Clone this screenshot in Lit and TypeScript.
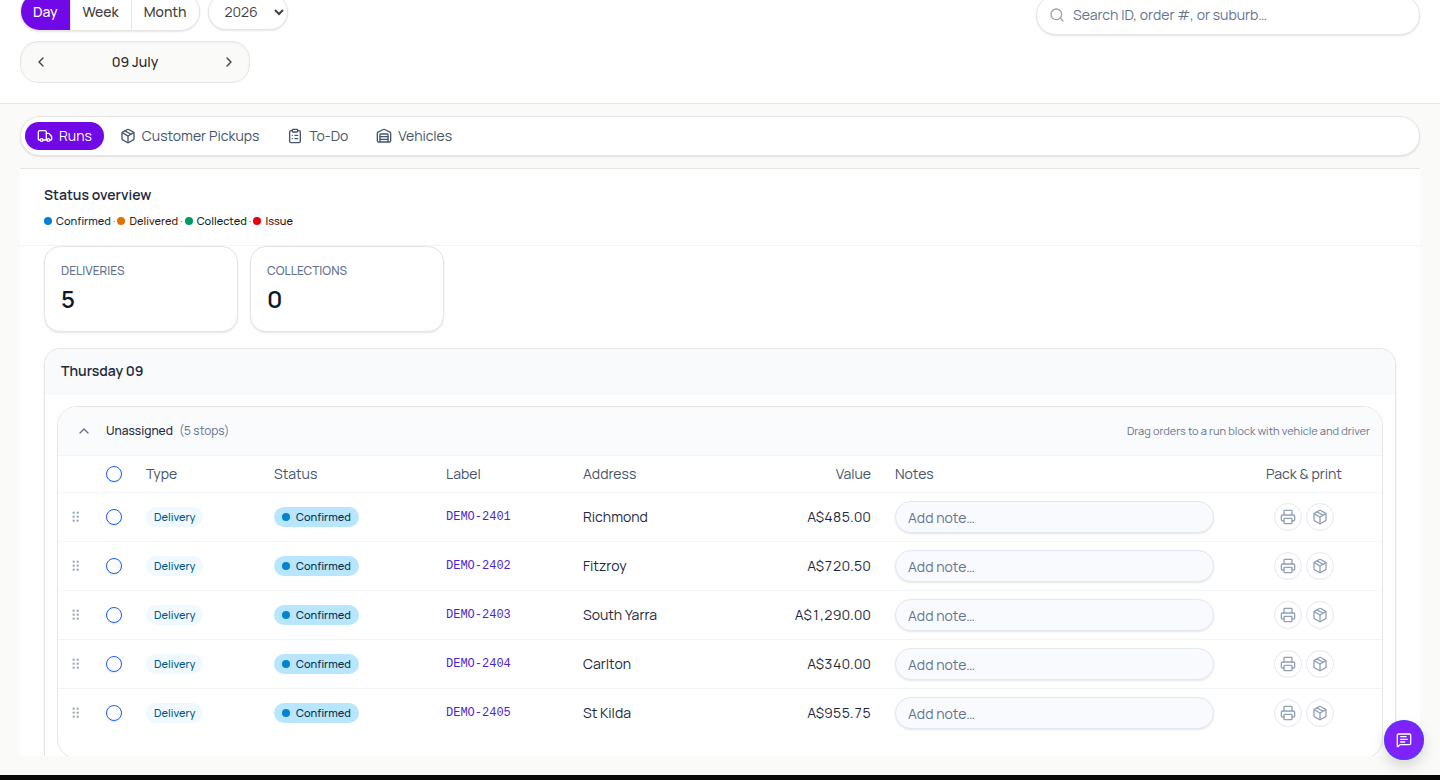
import { LitElement, html, css, svg, nothing } from "lit";
import { customElement, property, state } from "lit/decorators.js";
import { classMap } from "lit/directives/class-map.js";

const ICONS: Record<string, unknown> = {
  truck: svg`<path d="M14 18V6a2 2 0 0 0-2-2H4a2 2 0 0 0-2 2v11a1 1 0 0 0 1 1h2"/><path d="M15 18H9"/><path d="M19 18h2a1 1 0 0 0 1-1v-3.65a1 1 0 0 0-.22-.624l-3.48-4.35A1 1 0 0 0 17.52 8H14"/><circle cx="17" cy="18" r="2"/><circle cx="7" cy="18" r="2"/>`,
  package: svg`<path d="M11 21.73a2 2 0 0 0 2 0l7-4A2 2 0 0 0 21 16V8a2 2 0 0 0-1-1.73l-7-4a2 2 0 0 0-2 0l-7 4A2 2 0 0 0 3 8v8a2 2 0 0 0 1 1.73z"/><path d="M12 22V12"/><path d="M3.29 7 12 12l8.710-5"/><path d="m7.500 4.270 9 5.150"/>`,
  clipboard: svg`<rect width="8" height="4" x="8" y="2" rx="1" ry="1"/><path d="M16 4h2a2 2 0 0 1 2 2v14a2 2 0 0 1-2 2H6a2 2 0 0 1-2-2V6a2 2 0 0 1 2-2h2"/><path d="M12 11h4"/><path d="M12 16h4"/><path d="M8 11h.01"/><path d="M8 16h.01"/>`,
  warehouse: svg`<path d="M18 21V10a1 1 0 0 0-1-1H7a1 1 0 0 0-1 1v11"/><path d="M22 19a2 2 0 0 1-2 2H4a2 2 0 0 1-2-2V8a2 2 0 0 1 1.132-1.803l7.950-3.974a2 2 0 0 1 1.837 0l7.948 3.974A2 2 0 0 1 22 8z"/><path d="M6 13h12"/><path d="M6 17h12"/>`,
  search: svg`<circle cx="11" cy="11" r="8"/><path d="m21 21-4.340-4.340"/>`,
  left: svg`<path d="m15 18-6-6 6-6"/>`,
  right: svg`<path d="m9 18 6-6-6-6"/>`,
  up: svg`<path d="m18 15-6-6-6 6"/>`,
  down: svg`<path d="m6 9 6 6 6-6"/>`,
  printer: svg`<path d="M6 18H4a2 2 0 0 1-2-2v-5a2 2 0 0 1 2-2h16a2 2 0 0 1 2 2v5a2 2 0 0 1-2 2h-2"/><path d="M6 9V3a1 1 0 0 1 1-1h10a1 1 0 0 1 1 1v6"/><rect x="6" y="14" width="12" height="8" rx="1"/>`,
  message: svg`<path d="M22 17a2 2 0 0 1-2 2H6.828a2 2 0 0 0-1.414.586l-2.202 2.202A.71.71 0 0 1 2 21.286V5a2 2 0 0 1 2-2h16a2 2 0 0 1 2 2z"/><path d="M7 11h10"/><path d="M7 15h6"/><path d="M7 7h8"/>`,
  grip: svg`<g fill="currentColor" stroke="none"><rect x="7" y="4" width="3" height="3"/><rect x="13" y="4" width="3" height="3"/><rect x="7" y="10" width="3" height="3"/><rect x="13" y="10" width="3" height="3"/><rect x="7" y="16" width="3" height="3"/><rect x="13" y="16" width="3" height="3"/></g>`,
};

@customElement("ui-icon")
export class UiIcon extends LitElement {
  @property() name = "";

  static styles = css`
    :host { display: inline-flex; width: 16px; height: 16px; flex: none; }
    .icon { width: 100%; height: 100%; display: block; }
  `;

  render() {
    return html`<svg class="icon" viewBox="0 0 24 24" fill="none" stroke="currentColor"
      stroke-width="2" stroke-linecap="round" stroke-linejoin="round" aria-hidden="true">${ICONS[this.name] ?? nothing}</svg>`;
  }
}

interface Stop { id: string; address: string; value: string; }

const STOPS: Stop[] = [
  { id: "DEMO-2401", address: "Richmond", value: "A$485.00" },
  { id: "DEMO-2402", address: "Fitzroy", value: "A$720.50" },
  { id: "DEMO-2403", address: "South Yarra", value: "A$1,290.00" },
  { id: "DEMO-2404", address: "Carlton", value: "A$340.00" },
  { id: "DEMO-2405", address: "St Kilda", value: "A$955.75" },
];

const TABS = [
  { label: "Runs", icon: "truck" },
  { label: "Customer Pickups", icon: "package" },
  { label: "To-Do", icon: "clipboard" },
  { label: "Vehicles", icon: "warehouse" },
];

const LEGEND = ["Confirmed", "Delivered", "Collected", "Issue"];

@customElement("app-root")
export class AppRoot extends LitElement {
  @state() private view = "Day";
  @state() private tab = "Runs";
  @state() private open = true;

  static styles = css`
    :host {
      display: flex;
      flex-direction: column;
      height: 100vh;
      overflow: hidden;
      box-sizing: border-box;
      border-bottom: 5px solid #0a0a0b;
      background: #fafaf9;
      color: #0f172b;
      font: 400 14px/20px Manrope, Inter, "Liberation Sans", sans-serif;
    }
    *, *::before, *::after { box-sizing: border-box; }
    button, input, select { font: inherit; color: inherit; margin: 0; }
    button { cursor: pointer; border: 0; padding: 0; background: none; }
    h1, h2, p, ul { margin: 0; padding: 0; font: inherit; list-style: none; }

    .header {
      flex: none;
      display: flex;
      justify-content: space-between;
      align-items: flex-start;
      margin-top: -8px;
      padding: 0 20px 20px;
      background: #fff;
      border-bottom: 1px solid #e7e5e4;
    }
    .period { display: flex; flex-direction: column; gap: 10px; }
    .period-row { display: flex; align-items: center; gap: 8px; }
    .segments {
      display: flex;
      height: 39px;
      border: 1px solid #e7e5e4;
      border-radius: 20px;
      overflow: hidden;
      background: #fff;
      box-shadow: 0 1px 2px #0000001a;
    }
    .segment { padding: 0 12px; font-weight: 500; color: #44403b; border-left: 1px solid #e7e5e4; }
    .segment:first-child { border-left: 0; }
    .segment.active { background: #7008e7; color: #fff; }
    .year {
      width: 80px;
      height: 36px;
      padding: 0 0 0 12px;
      border: 1px solid #e7e5e4;
      border-radius: 18px;
      background: #fff;
      color: #44403b;
      box-shadow: 0 1px 2px #0000001a;
    }
    .stepper {
      display: flex;
      align-items: center;
      justify-content: space-between;
      width: 230px;
      height: 42px;
      padding: 0 4px;
      border: 1px solid #e7e5e4;
      border-radius: 18px;
      background: #fafaf9;
      box-shadow: inset 0 1px 3px #0000000a;
    }
    .step { display: flex; align-items: center; justify-content: center; width: 32px; height: 32px; color: #44403b; }
    .date { font-weight: 500; color: #292524; }
    .search {
      display: flex;
      align-items: center;
      gap: 8px;
      width: 384px;
      height: 40px;
      margin-top: 3px;
      padding: 0 12px;
      border: 1px solid #e7e5e4;
      border-radius: 20px;
      background: #fff;
      color: #a6a09b;
      box-shadow: 0 1px 2px #0000001a;
    }
    .search-input { flex: 1; min-width: 0; border: 0; outline: 0; background: none; padding: 0; color: #0f172b; }
    .search-input::placeholder, .note::placeholder { color: #62748e; opacity: 1; }

    .tabs {
      flex: none;
      display: flex;
      align-items: center;
      gap: 4px;
      height: 40px;
      margin: 12px 20px;
      padding: 0 4px;
      border: 1px solid #e7e5e4;
      border-radius: 20px;
      background: #fff;
      box-shadow: 0 1px 2px #0000001a;
    }
    .tab {
      display: flex;
      align-items: center;
      gap: 6px;
      height: 28px;
      padding: 0 12px;
      border-radius: 14px;
      color: #45556c;
    }
    .tab.active { background: #7008e7; color: #fff; }

    .panel {
      flex: 1;
      min-height: 0;
      overflow: hidden;
      margin: 0 20px 19px;
      border-top: 1px solid #e7e5e4;
      background: #fff;
    }
    .overview { padding: 16px 24px; border-bottom: 1px solid #f1f5f9; }
    .overview-title { font-weight: 600; color: #1d293d; }
    .legend { display: flex; align-items: center; margin-top: 8px; font-size: 11px; line-height: 16px; font-weight: 500; }
    .legend-item { display: flex; align-items: center; gap: 4px; }
    .legend-item + .legend-item::before { content: "·"; color: #62748e; margin: 0 -2px 0 2px; }
    .dot { width: 8px; height: 8px; border-radius: 50%; flex: none; background: #0084d1; }
    .confirmed { color: #052f4a; }
    .delivered { color: #461901; }
    .collected { color: #002c22; }
    .issue { color: #460809; }
    .delivered .dot { background: #e17100; }
    .collected .dot { background: #009966; }
    .issue .dot { background: #e7000b; }

    .body { padding: 0 24px; }
    .stats { display: flex; gap: 12px; margin-bottom: 16px; }
    .stat {
      width: 194px;
      padding: 16px;
      border: 1px solid #e7e5e4;
      border-radius: 16px;
      background: #fff;
      box-shadow: 0 1px 2px #0000001a;
    }
    .stat-label { font-size: 12px; line-height: 16px; font-weight: 500; color: #62748e; }
    .stat-value { margin-top: 4px; font-size: 24px; line-height: 32px; font-weight: 600; }

    .day { border: 1px solid #e7e5e4; border-radius: 16px; overflow: hidden; box-shadow: 0 1px 2px #0000001a; }
    .day-title { padding: 12px 16px; font-weight: 600; color: #1d293d; background: #f9fafc; border-bottom: 1px solid #f1f5f9; }
    .day-body { padding: 12px; }
    .run { border: 1px solid #e7e5e4; border-radius: 20px; overflow: hidden; padding-bottom: 20px; }
    .run-head {
      display: flex;
      align-items: center;
      height: 49px;
      padding: 0 12px;
      background: #fafbfd;
      border-bottom: 1px solid #f1f5f9;
      font-size: 12px;
      color: #62748e;
    }
    .toggle { display: flex; align-items: center; justify-content: center; width: 28px; height: 28px; margin-right: 8px; }
    .run-name { font-weight: 500; color: #1d293d; margin-right: 6px; }
    .hint { margin-left: auto; font-size: 11px; }

    .stops { width: 100%; border-collapse: separate; border-spacing: 0; table-layout: fixed; }
    .stops th, .stops td { padding: 0 12px; text-align: left; font-weight: 400; }
    .stops th { height: 37px; color: #45556c; border-bottom: 1px solid #f1f5f9; }
    .stops td { height: 49px; border-bottom: 1px solid #f1f5f9; color: #1d293d; }
    .stops tr:last-child td { border-bottom-color: transparent; }
    .stops .num { text-align: right; font-variant-numeric: tabular-nums; }
    .stops .center { text-align: center; }
    .stops .grip { padding: 0 0 0 10px; color: #90a1b9; }
    .grip-handle { display: flex; width: 16px; height: 16px; color: #90a1b9; cursor: grab; }
    .col-grip { width: 36px; }
    .col-check { width: 40px; }
    .col-type { width: 128px; }
    .col-status { width: 172px; }
    .col-label { width: 137px; }
    .col-value { width: 140px; }
    .col-notes { width: 343px; }
    .col-pack { width: 156px; }
    .check {
      appearance: none;
      display: block;
      width: 16px;
      height: 16px;
      border: 1px solid #155dfc;
      border-radius: 50%;
      background: #fff;
      box-shadow: 0 1px 2px #0000001a;
    }
    .check:checked { background: #155dfc; }
    .pill {
      display: flex;
      align-items: center;
      gap: 6px;
      width: fit-content;
      height: 20px;
      padding: 0 8px;
      border-radius: 10px;
      font-size: 11px;
      line-height: 20px;
      font-weight: 500;
    }
    .pill.type { background: #f0f9ff; color: #00598a; }
    .pill.status { background: #b8e6fe; color: #052f4a; }
    .order { display: block; font: 12px/16px "Liberation Mono", monospace; color: #4f1fd8; text-decoration: none; }
    .note {
      display: block;
      width: 100%;
      height: 32px;
      padding: 0 12px;
      border: 1px solid #e2e8f0;
      border-radius: 16px;
      background: #f9fafe;
      outline: 0;
      box-shadow: 0 1px 2px #0000001a;
    }
    .actions { display: flex; justify-content: center; gap: 4px; }
    .action {
      display: flex;
      align-items: center;
      justify-content: center;
      width: 28px;
      height: 28px;
      border: 1px solid #e2e8f0;
      border-radius: 50%;
      color: #90a1b9;
    }
    .chat {
      position: fixed;
      right: 16px;
      bottom: 20px;
      display: flex;
      align-items: center;
      justify-content: center;
      width: 40px;
      height: 40px;
      border-radius: 50%;
      background: #7f22fe;
      color: #fff;
      box-shadow: inset 0 0 0 1px #155dfc80, 0 6px 14px #00000026;
    }
  `;

  private renderStop(stop: Stop) {
    return html`
      <tr>
        <td class="grip"><span class="grip-handle"><ui-icon name="grip"></ui-icon></span></td>
        <td><input class="check" type="checkbox" aria-label="Select ${stop.id}" /></td>
        <td><span class="pill type">Delivery</span></td>
        <td><span class="pill status"><span class="dot"></span>Confirmed</span></td>
        <td><a class="order" href="#${stop.id}">${stop.id}</a></td>
        <td>${stop.address}</td>
        <td class="num">${stop.value}</td>
        <td><input class="note" type="text" placeholder="Add note…" aria-label="Note for ${stop.id}" /></td>
        <td>
          <div class="actions">
            <button class="action" type="button" aria-label="Print ${stop.id}"><ui-icon name="printer"></ui-icon></button>
            <button class="action" type="button" aria-label="Pack ${stop.id}"><ui-icon name="package"></ui-icon></button>
          </div>
        </td>
      </tr>
    `;
  }

  private renderStops() {
    return html`
      <table class="stops">
        <colgroup>
          <col class="col-grip" /><col class="col-check" /><col class="col-type" />
          <col class="col-status" /><col class="col-label" /><col />
          <col class="col-value" /><col class="col-notes" /><col class="col-pack" />
        </colgroup>
        <thead>
          <tr>
            <th></th>
            <th><input class="check" type="checkbox" aria-label="Select all stops" /></th>
            <th>Type</th>
            <th>Status</th>
            <th>Label</th>
            <th>Address</th>
            <th class="num">Value</th>
            <th>Notes</th>
            <th class="center">Pack &amp; print</th>
          </tr>
        </thead>
        <tbody>${STOPS.map((stop) => this.renderStop(stop))}</tbody>
      </table>
    `;
  }

  render() {
    return html`
      <header class="header">
        <div class="period">
          <div class="period-row">
            <div class="segments" role="group" aria-label="View">
              ${["Day", "Week", "Month"].map((name) => html`
                <button type="button" class=${classMap({ segment: true, active: this.view === name })}
                  @click=${() => (this.view = name)}>${name}</button>`)}
            </div>
            <select class="year" aria-label="Year"><option>2026</option></select>
          </div>
          <div class="stepper">
            <button class="step" type="button" aria-label="Previous day"><ui-icon name="left"></ui-icon></button>
            <span class="date">09 July</span>
            <button class="step" type="button" aria-label="Next day"><ui-icon name="right"></ui-icon></button>
          </div>
        </div>
        <label class="search">
          <ui-icon name="search"></ui-icon>
          <input class="search-input" type="text" aria-label="Search" placeholder="Search ID, order #, or suburb…" />
        </label>
      </header>

      <nav class="tabs">
        ${TABS.map((tab) => html`
          <button type="button" class=${classMap({ tab: true, active: this.tab === tab.label })}
            @click=${() => (this.tab = tab.label)}><ui-icon name=${tab.icon}></ui-icon>${tab.label}</button>`)}
      </nav>

      <main class="panel">
        <section class="overview">
          <h1 class="overview-title">Status overview</h1>
          <ul class="legend">
            ${LEGEND.map((name) => html`<li class="legend-item ${name.toLowerCase()}"><span class="dot"></span>${name}</li>`)}
          </ul>
        </section>
        <div class="body">
          <div class="stats">
            <div class="stat"><p class="stat-label">DELIVERIES</p><p class="stat-value">5</p></div>
            <div class="stat"><p class="stat-label">COLLECTIONS</p><p class="stat-value">0</p></div>
          </div>
          <section class="day">
            <h2 class="day-title">Thursday 09</h2>
            <div class="day-body">
              <div class="run">
                <div class="run-head">
                  <button class="toggle" type="button" aria-label="Toggle unassigned stops"
                    @click=${() => (this.open = !this.open)}><ui-icon name=${this.open ? "up" : "down"}></ui-icon></button>
                  <span class="run-name">Unassigned</span>
                  <span>(5 stops)</span>
                  <span class="hint">Drag orders to a run block with vehicle and driver</span>
                </div>
                ${this.open ? this.renderStops() : nothing}
              </div>
            </div>
          </section>
        </div>
      </main>

      <button class="chat" type="button" aria-label="Open chat"><ui-icon name="message"></ui-icon></button>
    `;
  }
}
